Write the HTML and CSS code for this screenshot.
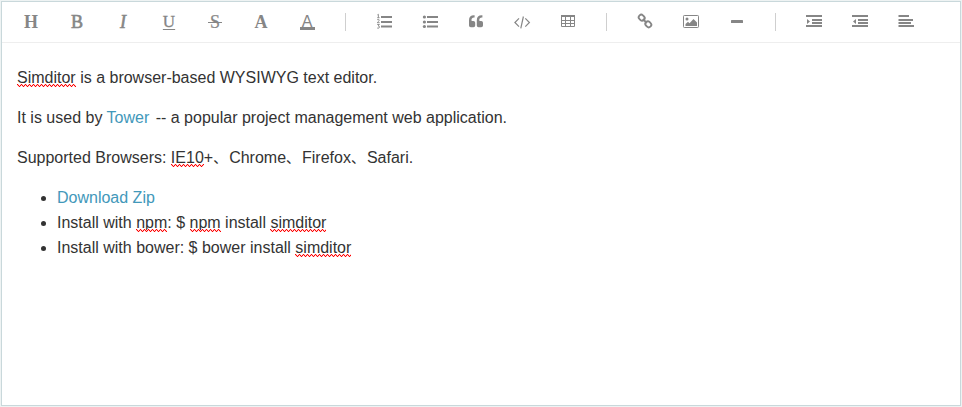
FILE: index.html
```html
<!DOCTYPE html>
<html lang="en">
<head>
<meta charset="utf-8">
<title>Simditor</title>
<link rel="stylesheet" href="styles.css">
</head>
<body>
<div class="simditor">
  <div class="toolbar">
    <span class="item letter">H</span>
    <span class="item letter light">B</span>
    <span class="item letter light italic">I</span>
    <span class="item letter light underline">U</span>
    <span class="item letter light strike">S</span>
    <span class="item letter">A</span>
    <span class="item letter color">A</span>
    <span class="separator"></span>
    <span class="item"><svg viewBox="0 0 20 20"><path d="M7 4h11v2H7zM7 9h11v2H7zM7 13.500h11v2H7z"/><path class="thin" d="M3.400 2.900l1-.6v3.400M3.200 5.700h2.400M3.200 7.700q2-1 2 .5 0 .8-2 2.500h2.500M3.200 12.500h2.200l-1.200 1.400q1.300 0 1.300 1.200 0 1.500-2.300 1"/></svg></span>
    <span class="item"><svg viewBox="0 0 20 20"><path d="M7 4h11v2H7zM7 9h11v2H7zM7 13.500h11v2H7z"/><circle cx="4.400" cy="5" r="1.600"/><circle cx="4.400" cy="10" r="1.600"/><circle cx="4.400" cy="14.500" r="1.600"/></svg></span>
    <span class="item"><svg viewBox="0 0 20 20"><path id="q" d="M9.200 10.800v2.700q0 1.800-1.800 1.800H4.800Q3 15.300 3 13.500V8.200Q3 3.200 8 3.200h.6v2.300H8Q5.600 5.500 5.400 8.300q0 .7.900.7h1.100q1.800 0 1.800 1.800z"/><use href="#q" x="7.800"/></svg></span>
    <span class="item"><svg viewBox="0 0 20 20"><path class="line code" d="M7 6.300L2.900 10.500 7 14.600M13.300 6.300l4.100 4.200-4.100 4.100M11.400 4.500L8.800 16.300"/></svg></span>
    <span class="item"><svg viewBox="0 0 20 20"><path d="M3 3h14v2H3z"/><path class="line" d="M3.500 4v10.500h13V4M3.500 8.500h13M3.500 11.500h13M7.500 5v10M12.500 5v10"/></svg></span>
    <span class="separator"></span>
    <span class="item"><svg viewBox="0 0 20 20"><g class="chain"><rect x="-3.100" y="-2.500" width="6.200" height="5" rx="2.300" transform="translate(6.700 5.700) rotate(45)"/><rect x="-3.100" y="-2.500" width="6.200" height="5" rx="2.300" transform="translate(13.300 12.300) rotate(45)"/><path d="M7.800 7l4 4"/></g></svg></span>
    <span class="item"><svg viewBox="0 0 20 20"><rect class="line" x="2.500" y="3.500" width="15" height="12" rx=".8"/><circle cx="6" cy="7" r="1.500"/><path d="M4.500 14v-2L7 9.700l1.500 1.500L12.500 7l3.500 3.500V14z"/></svg></span>
    <span class="item"><svg viewBox="0 0 20 20"><rect x="4" y="8" width="12" height="3" rx=".6"/></svg></span>
    <span class="separator"></span>
    <span class="item"><svg viewBox="0 0 20 20"><path d="M2 3h16v2H2zM8 7h10v2H8zM8 10h10v2H8zM2 13h16v2H2zM3 7l3 2.500L3 12z"/></svg></span>
    <span class="item"><svg viewBox="0 0 20 20"><path d="M2 3h16v2H2zM8 7h10v2H8zM8 10h10v2H8zM2 13h16v2H2zM6 7L3 9.500 6 12z"/></svg></span>
    <span class="item"><svg viewBox="0 0 20 20"><path d="M2.500 3H13v2H2.500zM2.500 7H17v2H2.500zM2.500 10H15v2H2.500zM2.500 13H18v2H2.500z"/></svg></span>
  </div>
  <div class="body">
    <p><span class="typo">Simditor</span> is a browser-based WYSIWYG text editor.</p>
    <p>It is used by <a class="tower">Tower</a> -- a popular project management web application.</p>
    <p>Supported Browsers: <span class="typo">IE10</span>+<span class="cjk">、</span>Chrome<span class="cjk">、</span>Firefox<span class="cjk">、</span>Safari.</p>
    <ul>
      <li><a>Download Zip</a></li>
      <li>Install with <span class="typo">npm</span>: $ <span class="typo">npm</span> install <span class="typo">simditor</span></li>
      <li>Install with bower: $ bower install <span class="typo">simditor</span></li>
    </ul>
  </div>
</div>
</body>
</html>
```
FILE: styles.css
```css
* { box-sizing: border-box; }
body {
  margin: 0;
  padding: 1px;
  height: 407px;
  background: #eef3f3;
  font: 16px/25px "Liberation Sans", "Noto Sans CJK SC", sans-serif;
  color: #333;
}
.simditor {
  height: 405px;
  border: 1px solid #c9d8db;
  background: #fff;
}
.toolbar {
  display: flex;
  height: 41px;
  padding-left: 6px;
  border-bottom: 1px solid #eee;
}
.item {
  display: flex;
  width: 46px;
  height: 40px;
  align-items: center;
  justify-content: center;
  color: #868686;
}
.item svg { width: 20px; height: 20px; fill: #868686; }
.item .line, .item .thin, .item .chain { fill: none; stroke: #868686; }
.item .thin { stroke-width: .9; }
.item .code { stroke-width: 1.2; }
.item .chain { stroke-width: 1.8; }
.letter { font: bold 18px/40px "Liberation Serif", serif; }
.light { font-weight: normal; -webkit-text-stroke: .6px #868686; }
.italic { font-style: italic; }
.underline {
  font-size: 17px;
  line-height: 38px;
  text-decoration: underline 1px;
  text-underline-offset: 2px;
  -webkit-text-stroke-width: .3px;
}
.strike {
  position: relative;
  -webkit-text-stroke-width: .2px;
}
.strike::after {
  content: "";
  position: absolute;
  left: 16px;
  top: 20px;
  width: 14px;
  height: 1px;
  background: #868686;
}
.color {
  position: relative;
  font: 16px/38px "Liberation Sans", sans-serif;
}
.color::after {
  content: "";
  position: absolute;
  left: 16px;
  top: 25px;
  width: 15px;
  height: 3px;
  background: #868686;
}
.separator {
  width: 1px;
  height: 18px;
  margin: 11px 15px 0;
  background: #cfcfcf;
}
.body { padding: 22px 15px; }
p { margin: 0 0 15px; }
ul { margin: 0; padding-left: 40px; }
a { color: #4298ba; }
.tower { margin-right: 2px; }
.cjk { display: inline-block; width: 16px; font-size: 14px; line-height: 1; }
.typo { position: relative; }
.typo::after {
  content: "";
  position: absolute;
  left: 0;
  right: 0;
  bottom: -1px;
  height: 3px;
  background:
    repeating-linear-gradient(90deg, #f00 0 1px, #fcc 1px 2px, transparent 2px 3px, #fcc 3px 4px) 0 0 / 100% 1px no-repeat,
    repeating-linear-gradient(90deg, #fcc 0 1px, #f00 1px 2px) 0 1px / 100% 1px no-repeat,
    repeating-linear-gradient(90deg, transparent 0 1px, #fcc 1px 2px, #f00 2px 3px, #fcc 3px 4px) 0 2px / 100% 1px no-repeat;
}
```
